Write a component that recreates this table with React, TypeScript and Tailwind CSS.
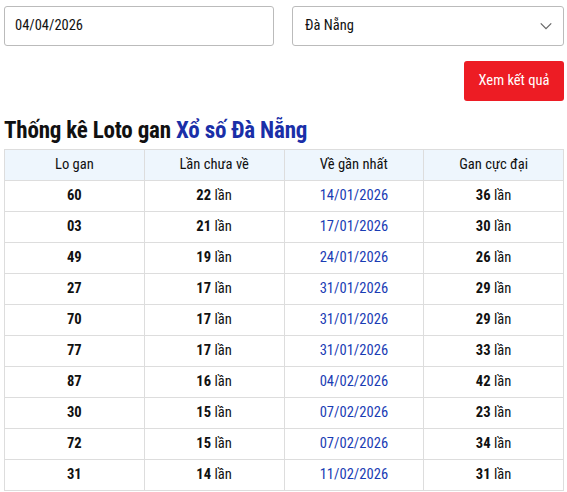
import React from 'react';

const rows = [
  { so: '60', lan: 22, ngay: '14/01/2026', max: 36 },
  { so: '03', lan: 21, ngay: '17/01/2026', max: 30 },
  { so: '49', lan: 19, ngay: '24/01/2026', max: 26 },
  { so: '27', lan: 17, ngay: '31/01/2026', max: 29 },
  { so: '70', lan: 17, ngay: '31/01/2026', max: 29 },
  { so: '77', lan: 17, ngay: '31/01/2026', max: 33 },
  { so: '87', lan: 16, ngay: '04/02/2026', max: 42 },
  { so: '30', lan: 15, ngay: '07/02/2026', max: 23 },
  { so: '72', lan: 15, ngay: '07/02/2026', max: 34 },
  { so: '31', lan: 14, ngay: '11/02/2026', max: 31 },
];

const App: React.FC = () => {
  return (
    <div className="w-[567px] h-[492px] overflow-hidden bg-white pl-1 pr-[3px] pt-1.5 text-[#111] font-['Roboto_Condensed','Roboto',sans-serif]">
      <div className="flex gap-[18px]">
        <div className="flex-1 h-[40px] border border-[#bbb] rounded-[3px] flex items-center px-2.5 text-[14.5px]">
          04/04/2026
        </div>
        <div className="flex-1 h-[40px] border border-[#bbb] rounded-[3px] flex items-center justify-between pl-3 pr-2.5 text-[14.5px]">
          <span>Đà Nẵng</span>
          <svg width="14" height="14" viewBox="0 0 16 16" fill="none" stroke="#666" strokeWidth="1.4">
            <path d="M2 5l6 6 6-6" />
          </svg>
        </div>
      </div>
      <div className="flex justify-end mt-[15px]">
        <button className="h-[40px] w-[100px] bg-[#ed1c24] text-white text-[14.5px] rounded-[3px]">
          Xem kết quả
        </button>
      </div>
      <h2 className="mt-[16px] mb-[4px] text-[23px] font-bold leading-[28px] tracking-[-0.2px]">
        Thống kê Loto gan <span className="text-[#1a2fa8]">Xổ số Đà Nẵng</span>
      </h2>
      <table className="w-[560px] border-collapse table-fixed text-[14.6px] text-center">
        <thead>
          <tr className="bg-[#eef6fd] h-[31px]">
            <th className="font-normal border border-[#ddd]">Lo gan</th>
            <th className="font-normal border border-[#ddd]">Lần chưa về</th>
            <th className="font-normal border border-[#ddd]">Về gần nhất</th>
            <th className="font-normal border border-[#ddd]">Gan cực đại</th>
          </tr>
        </thead>
        <tbody>
          {rows.map((r) => (
            <tr key={r.so} className="h-[31px]">
              <td className="border border-[#ddd] font-bold">{r.so}</td>
              <td className="border border-[#ddd]"><b>{r.lan}</b> lần</td>
              <td className="border border-[#ddd] text-[#1a3cb4]">{r.ngay}</td>
              <td className="border border-[#ddd]"><b>{r.max}</b> lần</td>
            </tr>
          ))}
        </tbody>
      </table>
    </div>
  );
};

export default App;
